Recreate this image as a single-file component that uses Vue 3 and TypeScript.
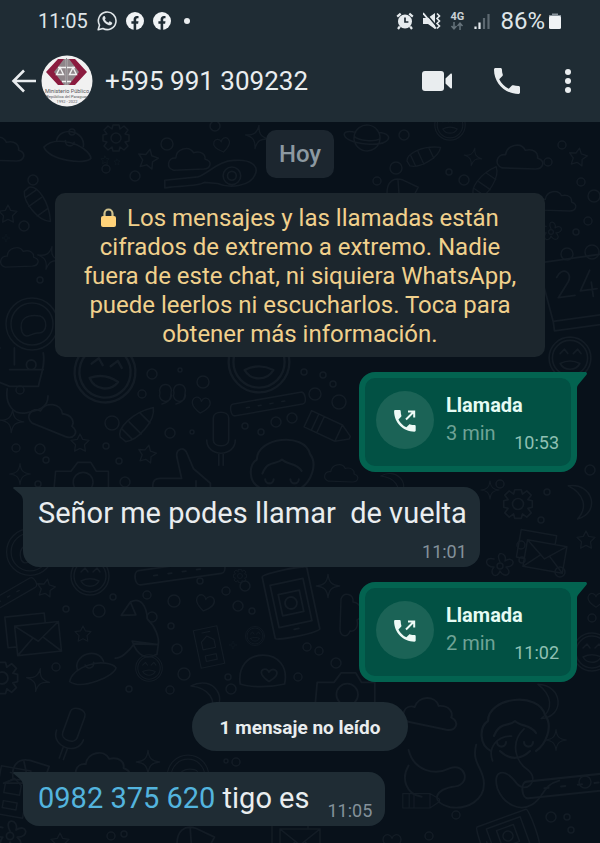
<script setup lang="ts">
type Message =
  | { id: number; kind: 'call'; title: string; duration: string; time: string }
  | { id: number; kind: 'text'; phone?: string; text: string; time: string; inline: boolean }
  | { id: number; kind: 'unread'; text: string }

const contact = '+595 991 309232'

const messages: Message[] = [
  { id: 1, kind: 'call', title: 'Llamada', duration: '3 min', time: '10:53' },
  { id: 2, kind: 'text', text: 'Señor me podes llamar  de vuelta', time: '11:01', inline: false },
  { id: 3, kind: 'call', title: 'Llamada', duration: '2 min', time: '11:02' },
  { id: 4, kind: 'unread', text: '1 mensaje no leído' },
  { id: 5, kind: 'text', phone: '0982 375 620', text: ' tigo es', time: '11:05', inline: true },
]

/* Wallpaper: rings are [x, y, radius], stamps are [shape, x, y, scale, rotation]. */
const rings: [number, number, number][] = [
  [33, 180, 5], [167, 144, 6], [215, 126, 5], [135, 176, 5], [106, 169, 4], [24, 226, 5], [40, 280, 3], [72, 132, 3],
  [404, 135, 5], [396, 168, 6], [377, 181, 4], [449, 172, 3], [464, 180, 5], [548, 162, 4], [562, 145, 4], [581, 182, 4],
  [594, 196, 6], [588, 221, 4], [576, 232, 3], [567, 254, 6], [592, 252, 7],
  [152, 374, 5], [142, 394, 4], [203, 382, 6], [304, 372, 3], [323, 375, 3], [333, 384, 3], [315, 394, 6], [339, 402, 7],
  [112, 423, 7], [40, 449, 5], [16, 448, 4], [106, 446, 3], [119, 461, 3], [46, 460, 3], [245, 426, 3],
  [170, 433, 5], [276, 422, 5], [292, 418, 5], [261, 432, 3], [125, 482, 5], [38, 484, 3], [192, 432, 2], [180, 370, 2],
  [113, 597, 3], [147, 595, 4], [174, 601, 6], [200, 581, 3], [226, 591, 4], [245, 586, 5], [99, 611, 6], [152, 617, 5],
  [171, 626, 3], [238, 606, 5], [252, 611, 3], [177, 649, 5], [184, 674, 6], [228, 677, 3], [231, 689, 5], [170, 690, 4],
  [307, 647, 4], [319, 651, 4], [336, 663, 5], [298, 677, 4], [56, 667, 4], [129, 689, 3], [66, 609, 3],
  [521, 545, 4], [541, 520, 3], [560, 572, 5], [592, 618, 4], [236, 762, 4], [226, 761, 2], [585, 782, 6],
  [551, 817, 5], [567, 817, 3], [456, 815, 4], [429, 836, 4], [571, 830, 3], [111, 836, 4], [124, 834, 3],
  [20, 390, 4], [590, 470, 5], [500, 484, 4], [547, 492, 3], [522, 560, 3],
]

const stamps: [string, number, number, number, number][] = [
  ['cloud', 2, 150, 1.1, 0], ['ufo', 68, 150, 1.1, 12], ['gear', 116, 138, 1, 0], ['star', 148, 159, 1, 12],
  ['cloud', 190, 160, 1, -4], ['heart', 222, 145, 0.8, -12], ['spark', 257, 137, 0.9, 10], ['guitar', 222, 178, 1.1, 0],
  ['star', 105, 160, 0.4, 0], ['star', 117, 162, 0.3, 0], ['rocket', 38, 206, 1, 100], ['star', 8, 214, 0.9, 0],
  ['cloud', 20, 258, 0.9, -4], ['spark', 49, 258, 0.9, 15], ['donut', 32, 324, 1, 0], ['spark', 6, 238, 0.3, 0],
  ['planet', 367, 138, 1, 8], ['smile', 450, 125, 0.8, 0], ['rocket', 425, 156, 0.9, 20], ['spark', 473, 157, 0.7, 12],
  ['cloud', 521, 158, 1.1, 0], ['star', 578, 157, 0.9, 10], ['rocket', 487, 182, 0.9, -10], ['cap', 402, 188, 1, 8],
  ['cloud', 558, 202, 0.9, 0], ['flower', 551, 232, 0.8, 0], ['calendar', 576, 294, 1.2, -8], ['smile', 570, 358, 1.1, 0],
  ['bear', 24, 372, 1.2, 0], ['smile', 105, 372, 1.6, 8], ['spark', 12, 421, 0.9, 4], ['cloud', 55, 420, 1.2, 20],
  ['rocket', 139, 424, 1.1, 0], ['star', 80, 443, 0.9, 0], ['star', 147, 454, 0.9, 12], ['heart', 201, 405, 0.9, 6],
  ['smile', 259, 362, 1.6, 0], ['note', 174, 393, 1, 0], ['bar', 268, 404, 1, -10], ['mic', 221, 440, 1.1, 0],
  ['girl', 282, 468, 1.4, 0], ['crayon', 330, 428, 1, 25], ['spark', 20, 474, 0.8, 0], ['hand', 184, 476, 1.2, 0],
  ['camera', 82, 480, 1.1, 0], ['cloud', 342, 474, 0.8, 0], ['donut', 30, 552, 0.9, 0], ['bar', 180, 572, 1.2, -8],
  ['star', 46, 588, 0.9, 10], ['smile', 90, 576, 1, 0], ['bar', 6, 598, 0.9, -30], ['mail', 38, 638, 1.1, -6],
  ['star', 83, 634, 0.8, 0], ['gear', 2, 678, 1.2, 0], ['spark', 38, 680, 0.9, 12], ['ufo', 92, 672, 1.1, -18],
  ['vase', 142, 640, 1.2, 8], ['smile', 149, 668, 0.7, 0], ['heart', 205, 603, 0.9, 12], ['phone', 209, 647, 0.8, -12],
  ['tablet', 291, 603, 1.2, -12], ['shell', 263, 672, 1.2, 0], ['spark', 328, 586, 0.9, 0], ['cloud', 350, 616, 1, 90],
  ['spark', 233, 645, 0.3, 0], ['camera', 346, 692, 1.2, 0], ['moon', 205, 696, 1, 0], ['smile', 255, 636, 0.5, 0],
  ['gear', 518, 504, 1.1, 0], ['moon', 578, 500, 1, 20], ['mail', 545, 556, 1, 10], ['star', 586, 540, 0.9, 0],
  ['flower', 500, 566, 1, 0], ['smile', 592, 652, 1, 0], ['heart', 596, 600, 0.8, 0], ['moon', 545, 700, 1, 30],
  ['cloud', 432, 714, 1.3, 10], ['girl', 515, 730, 1.5, 0], ['snake', 445, 776, 1.3, 0], ['snake', 520, 770, 1.2, 60],
  ['bar', 575, 785, 1.4, -6], ['tablet', 508, 836, 1, 70], ['spark', 148, 762, 0.9, 0], ['donut', 188, 776, 0.8, 0],
  ['cloud', 104, 768, 1.3, 0], ['cap', 30, 770, 1.2, 0], ['mic', 70, 735, 1.1, 20], ['phone', 12, 792, 1, 10],
  ['flower', 10, 836, 1.2, 0], ['cap', 195, 838, 1.2, 8], ['mail', 300, 842, 1, 0], ['star', 60, 842, 0.9, 0],
  ['heart', 392, 842, 0.9, 0], ['crayon', 422, 800, 0.8, 0], ['spark', 556, 740, 0.8, 0], ['gear', 240, 576, 0.5, 0],
  ['spark', 490, 490, 0.7, 0], ['moon', 392, 484, 0.8, 0],
]
</script>

<template>
  <div class="screen">
    <header class="top">
      <div class="status">
        <span class="clock">11:05</span>
        <svg class="s20" viewBox="0 0 20 20" aria-hidden="true">
          <path d="M1.2 18.8l1.3-4.7A8.8 8.8 0 1 1 5.900 17.500z" fill="none" stroke="#dfe5e8" stroke-width="1.600" stroke-linejoin="round" />
          <path d="M6.600 5.300c.5-.4 1.100-.3 1.300.2l.7 1.600c.1.400-.1.700-.7 1.400.8 1.500 1.900 2.500 3.500 3.200l1-1.100c.3-.3.500-.3.800-.1l1.700.9c.5.300.4.900.1 1.500-.6 1.100-2.200 1.600-3.700 1.100-2.800-.9-4.800-2.800-5.700-5.400-.4-1.400 0-2.600 1-3.300z" fill="#dfe5e8" />
        </svg>
        <svg v-for="n in 2" :key="n" class="s18" viewBox="0 0 18 18" aria-hidden="true">
          <circle cx="9" cy="9" r="9" fill="#f0f3f5" />
          <path d="M7.600 18v-6.200H5.400V9.200h2.200V7.500c0-2.300 1.300-3.500 3.300-3.500.8 0 1.600.1 1.600.1v2.100h-1c-1 0-1.300.6-1.300 1.300v1.700h2.300l-.4 2.600h-1.900V18z" fill="#1f2c34" />
        </svg>
        <span class="dot"></span>
        <span class="spacer"></span>
        <svg class="s18" viewBox="0 0 18 18" aria-hidden="true">
          <circle cx="9" cy="9.500" r="7" fill="#e6ebee" />
          <path d="M1.200 4.600l3.500-3M16.800 4.600l-3.500-3M3.800 14.500L2 17M14.200 14.500L16 17" stroke="#e6ebee" stroke-width="2.200" fill="none" />
          <path d="M9 5.500v4.500h3.400" stroke="#1f2c34" stroke-width="1.700" fill="none" />
        </svg>
        <svg class="s18" viewBox="0 0 18 18" aria-hidden="true">
          <path d="M0 6h5L12 1v16l-7-5H0z" fill="#e6ebee" />
          <path d="M2 .5l11 13" stroke="#1f2c34" stroke-width="1.500" />
          <path d="M0 1l13 15.500" stroke="#e6ebee" stroke-width="1.800" />
          <path d="M14 1.500l2.500 2.500L14 6.500 16.500 9 14 11.500l2.500 2.500-2.500 2.500" stroke="#e6ebee" stroke-width="1.600" fill="none" />
        </svg>
        <span class="network">
          <span>4G</span>
          <svg viewBox="0 0 14 8" width="14" height="8" aria-hidden="true">
            <path d="M4 0v6M1.500 4L4 6.800 6.500 4M10 8V2M7.500 4L10 1.200 12.500 4" fill="none" stroke="#66737b" stroke-width="1.500" />
          </svg>
        </span>
        <svg class="s18" viewBox="0 0 18 18" aria-hidden="true">
          <path d="M2.500 14.500V17M6.500 10.500V17" stroke="#e6ebee" stroke-width="2.200" />
          <path d="M11 6v11M15.500 2v15" stroke="#5d6971" stroke-width="2.200" />
        </svg>
        <span class="percent">86%</span>
        <svg width="14" height="18" viewBox="0 0 14 18" aria-hidden="true">
          <path d="M4 1.500h6V3h3v3H1V3h3z" fill="#87929a" />
          <rect x="1" y="4" width="12" height="13" rx="1.500" fill="#f0f3f5" />
        </svg>
      </div>

      <div class="bar">
        <button class="icon-button" type="button" aria-label="Atrás">
          <svg width="26" height="26" viewBox="0 0 26 26" aria-hidden="true">
            <path d="M25 13H3.500M13 2.500L2.500 13 13 23.500" fill="none" stroke="#e9edef" stroke-width="2.600" />
          </svg>
        </button>
        <svg class="avatar" viewBox="0 0 52 52" role="img" aria-label="Foto de perfil">
          <circle cx="26" cy="26" r="25.500" fill="#f1f1f1" />
          <path d="M12 17L22 4h7l10 13-10 13h-7z" fill="#8e8589" />
          <path d="M5 17L17 4h6L13 17l10 13h-6zM46 17L34 4h-6l10 13-10 13h6z" fill="#8b1b3f" />
          <path d="M25.500 4v26M17 12.500h17M19 12.500l-3.500 7h7zM32 12.500l-3.500 7h7zM21 26.500h9" fill="none" stroke="#f1f1f1" stroke-width="1.400" />
          <path d="M25.500 3v27" stroke="#68666a" stroke-width=".7" />
          <g text-anchor="middle" fill="#55565b">
            <text x="26" y="37.500" font-size="5.500">Ministerio Público</text>
            <text x="26" y="42.500" font-size="4">República del Paraguay</text>
            <text x="26" y="47.500" font-size="4">1992 - 2022</text>
          </g>
        </svg>
        <h1 class="contact">{{ contact }}</h1>
        <div class="actions">
          <button class="icon-button" type="button" aria-label="Videollamada">
            <svg width="30" height="20" viewBox="0 0 30 20" aria-hidden="true">
              <rect x="0" y="0" width="22" height="20" rx="3" fill="#e9edef" />
              <path d="M23.500 7.500L28.500 2.800c.8-.7 1.500-.3 1.500.6v13.200c0 .9-.7 1.300-1.500.6l-5-4.700z" fill="#e9edef" />
            </svg>
          </button>
          <button class="icon-button" type="button" aria-label="Llamar">
            <svg width="26" height="26" viewBox="3 3 18 18" aria-hidden="true">
              <path d="M6.620 10.790c1.440 2.830 3.760 5.140 6.590 6.590l2.200-2.200c.27-.27.67-.36 1.020-.24 1.120.37 2.330.57 3.570.57.55 0 1 .45 1 1V20c0 .55-.45 1-1 1-9.390 0-17-7.610-17-17 0-.55.45-1 1-1h3.500c.55 0 1 .45 1 1 0 1.250.2 2.450.57 3.570.11.35.03.74-.25 1.020l-2.200 2.200z" fill="#e9edef" />
            </svg>
          </button>
          <button class="icon-button" type="button" aria-label="Más opciones">
            <svg width="12" height="26" viewBox="0 0 12 26" aria-hidden="true">
              <g fill="#e9edef"><circle cx="6" cy="4" r="3" /><circle cx="6" cy="13" r="3" /><circle cx="6" cy="22" r="3" /></g>
            </svg>
          </button>
        </div>
      </div>
    </header>

    <main class="chat">
      <svg class="wallpaper" viewBox="0 122 600 721" preserveAspectRatio="xMidYMin slice" aria-hidden="true">
        <defs>
          <path id="cloud" d="M-17 9c-8-3-5-13 3-12 1-9 14-12 18-4 8-2 12 3 11 7 8 3 5 10-2 10z" />
          <path id="ufo" d="M-22 2c4-7 12-9 22-9s20 5 22 10c-3 7-36 10-44-1zM-12-6c0-14 24-15 25 0M-4-8a4 4 0 1 0 8 0" />
          <path id="gear" d="M-3-13h6l1 4 4-3 4 4-3 4 4 1v6l-4 1 3 4-4 4-4-3-1 4h-6l-1-4-4 3-4-4 3-4-4-1v-6l4-1-3-4 4-4 4 3zM5 0A5 5 0 1 1-5 0 5 5 0 1 1 5 0" />
          <path id="star" d="M0-10l3 6 7 1-5 5 1 7-6-3-6 3 1-7-5-5 7-1z" />
          <path id="heart" d="M0 9C-8 4-12-1-9-6c3-4 8-2 9 2 1-4 6-6 9-2 3 5-1 10-9 15z" />
          <path id="spark" d="M0-13C1-4 4-1 13 0 4 1 1 4 0 13-1 4-4 1-13 0-4-1-1-4 0-13z" />
          <path id="guitar" d="M-52 2l30-3c8-2 20-16 34-15 14-1 22 5 18 13-4 10-22 13-34 8l-12-1c-6 4-28 3-36 5zM17-2A8 8 0 1 1 1-2 8 8 0 1 1 17-2M13-2A4 4 0 1 1 5-2 4 4 0 1 1 13-2" />
          <path id="rocket" d="M-17 12c-3-8 10-22 30-27 2 12-14 30-25 31zM-9-2l11 11M1-10l9 9M-15 5l9 9" />
          <path id="donut" d="M26 0A26 26 0 1 1-26 0 26 26 0 1 1 26 0M21 0A21 21 0 1 1-21 0 21 21 0 1 1 21 0M-10 8c-4-14 6-18 18-16 8 2 8 18-2 17-6-1-12 8-16-1z" />
          <path id="planet" d="M13 0A13 13 0 1 1-13 0 13 13 0 1 1 13 0M-12-4C-30-6-26 8 0 6c24-1 28-14 11-13M-13 0C-8 4 8 3 13-1" />
          <path id="smile" d="M19 0A19 19 0 1 1-19 0 19 19 0 1 1 19 0M16 0A16 16 0 1 1-16 0 16 16 0 1 1 16 0M-9-4l4-4 3 4M3-4l4-4 3 4M-9 5c4 7 14 7 18 0-6-3-12-3-18 0z" />
          <path id="cap" d="M-14 8c-2-12 4-18 14-16L16-3 12 8zM-14 8l-8 3h32M-5-7l3 14" />
          <path id="flower" d="M0-4c-6-12 8-10 5-1 9-6 12 6 1 6 8 7-2 12-6 4-3 9-12 3-6-4-10 0-10-11 0-8M3 0A3 3 0 1 1-3 0 3 3 0 1 1 3 0" />
          <path id="calendar" d="M-28-30h56v50h-50zM-22 20v8h50v-8M-14-16c6-9 14-2 9 5l-10 12h14M14-18L4-2h14M14-8V4" />
          <path id="bear" d="M-20-20c-10-6-4 20-2 28l10 4h24c2-10 6-18 4-28M-12-2h28M-8-6V-20M2-6a4 4 0 1 0 8 0 4 4 0 1 0-8 0M-14 14c-2 14 6 22 16 20s18-4 18-14" />
          <path id="note" d="M-3 0A6 6 0 1 1-14 0 6 6 0 1 1-3 0M-3 0c0 8-4 10-9 11M11 0A6 6 0 1 1 0 0 6 6 0 1 1 11 0M11 0c0 8-4 10-9 11" />
          <path id="bar" d="M-34-6h68c5 0 5 12 0 12h-68c-5 0-5-12 0-12zM-22 0h3M-10 0h3M2 0h3M14 0h3" />
          <path id="mic" d="M-7-20c0-7 14-7 14 0V0c0 7-14 7-14 0zM-13 0c0 16 26 16 26 0M-2 13v10M2 13v10" />
          <path id="girl" d="M-16 14c-8-4-8-16-2-20 0-16 34-20 38-4 6 8 0 20-6 24M-14 4c4-10 10-6 14-10 4 4 10 2 14 8M-12 8a3 3 0 1 0 6 0M6 8a3 3 0 1 0 6 0M-10 14c6 6 14 6 20 0" />
          <path id="crayon" d="M-24-8h34l12 7v3L10 10h-34zM-16-8V9M-10-8V9M10-8V9" />
          <path id="hand" d="M-26 18V8c0-4 2-6 6-6h18l-4-18c-1-6 5-9 8-4l6 14 14 12v14M10 4v14" />
          <path id="camera" d="M-26 14l2-22h14l6-8H8l5 8h11v22zM10 2A9 9 0 1 1-8 2 9 9 0 1 1 10 2" />
          <path id="mail" d="M-20-13H20V14h-40zM-20-13L0 3 20-13M-20 14L-5 0M20 14L5 0M-20 6h-8v-28h36v8" />
          <path id="vase" d="M-14-30c8-6 14 2 16 12 8 6 12 14 12 20L-6 4c-4 8-10 14-14 14M-14-30L-20-18-8-20zM-8 2h22v8c-8 6-16 4-22-8z" />
          <path id="phone" d="M-15-24h30v48h-30zM-5-19h10M-8-8l8-6 8 6v10H-8zM-7 10H7v7H-7z" />
          <path id="tablet" d="M-19-26c0-3 38-3 38 0v52c0 3-38 3-38 0zM-14-18h28v36h-28zM-9-9H9V9H-9zM5 0A5 5 0 1 1-5 0 5 5 0 1 1 5 0M-2 22h4" />
          <path id="shell" d="M-19 10c-2-14 6-24 19-24s21 10 18 24c-12 3-28 3-37 0zM5 8c-6-4-8-8-5-10 2-1 4 0 5 2 1-2 4-3 6-1 2 3-1 6-6 9z" />
          <path id="moon" d="M-14-10C8-22 26 4 6 18 12 4 4-8-14-10z" />
          <path id="snake" d="M-28-20c4 16 20 20 32 14 12-4 16 12 4 14-16 2-20 12-4 16 14 2 26-6 26-18S20-10 24-24M-28-8c-6 10-2 22 10 24" />
        </defs>
        <g class="doodles">
          <circle v-for="(r, i) in rings" :key="'r' + i" :cx="r[0]" :cy="r[1]" :r="r[2]" />
          <use
            v-for="(s, i) in stamps"
            :key="'s' + i"
            :href="'#' + s[0]"
            :transform="`translate(${s[1]} ${s[2]}) rotate(${s[4]}) scale(${s[3]})`"
          />
        </g>
      </svg>

      <div class="thread">
        <div class="day">Hoy</div>
        <button class="notice" type="button">
          <svg class="lock" width="15" height="20" viewBox="0 0 15 20" aria-hidden="true">
            <path d="M3.500 9V5.500a4 4 0 0 1 8 0V9" fill="none" stroke="#cfc08c" stroke-width="2.200" />
            <rect x="0" y="8" width="15" height="11" rx="2" fill="#ffd279" />
          </svg>
          Los mensajes y las llamadas están cifrados de extremo a extremo. Nadie fuera de este chat, ni siquiera
          WhatsApp, puede leerlos ni escucharlos. Toca para obtener más información.
        </button>

        <template v-for="m in messages" :key="m.id">
          <article v-if="m.kind === 'call'" class="call">
            <svg class="tail tail-out" width="32" height="20" viewBox="0 0 32 20" aria-hidden="true">
              <path d="M0 0h30c2 0 2.500 1.500 1.300 3L23 13c-.7 1-1 2-1 3v4h-6v-4C16 10 12 6 6 6H0z" fill="#036350" />
            </svg>
            <span class="disc">
              <svg width="24" height="24" viewBox="0 0 24 24" aria-hidden="true">
                <path transform="translate(-2.500 -1.500) scale(1.200)" d="M6.620 10.790c1.440 2.830 3.760 5.140 6.590 6.590l2.200-2.200c.27-.27.67-.36 1.020-.24 1.120.37 2.330.57 3.570.57.55 0 1 .45 1 1V20c0 .55-.45 1-1 1-9.390 0-17-7.610-17-17 0-.55.45-1 1-1h3.500c.55 0 1 .45 1 1 0 1.250.2 2.450.57 3.570.11.35.03.74-.25 1.020l-2.200 2.200z" fill="#eefaf6" />
                <path d="M13 11.500L20.500 4M15 3.400h6.200v6.200" fill="none" stroke="#eefaf6" stroke-width="2" />
              </svg>
            </span>
            <div class="call-body">
              <strong class="call-title">{{ m.title }}</strong>
              <div class="call-row">
                <span class="duration">{{ m.duration }}</span>
                <time class="call-time">{{ m.time }}</time>
              </div>
            </div>
          </article>

          <article v-else-if="m.kind === 'text'" class="text" :class="{ inline: m.inline }">
            <svg class="tail tail-in" width="26" height="18" viewBox="0 0 26 18" aria-hidden="true">
              <path d="M26 0H2C0 0-.5 1 1 2l6 5c2 2 3 4 3 8v3h16z" fill="#1f2c34" />
            </svg>
            <p class="copy"><a v-if="m.phone" class="phone" href="tel:0982375620">{{ m.phone }}</a>{{ m.text }}</p>
            <time class="time">{{ m.time }}</time>
          </article>

          <div v-else class="unread">{{ m.text }}</div>
        </template>
      </div>
    </main>
  </div>
</template>

<style>
body {
  background: #08111a;
}
</style>

<style scoped>
.screen {
  min-height: 100vh;
  display: flex;
  flex-direction: column;
  font-family: Roboto, "Liberation Sans", sans-serif;
  color: #e9edef;
}

svg {
  display: block;
  flex: none;
}

.top {
  background: #1f2c34;
}

.status {
  display: flex;
  align-items: center;
  gap: 9px;
  height: 42px;
  padding: 0 38px;
}

.clock {
  font-size: 20px;
  color: #dfe5e8;
}

.s20 {
  width: 20px;
  height: 20px;
}

.s18 {
  width: 18px;
  height: 18px;
}

.dot {
  width: 6px;
  height: 6px;
  margin-left: 4px;
  border-radius: 50%;
  background: #e9edef;
}

.spacer {
  flex: 1;
}

.network {
  display: flex;
  flex-direction: column;
  align-items: center;
  font-size: 11px;
  line-height: 10px;
  font-weight: 700;
  color: #c9d1d5;
}

.percent {
  margin-right: -6px;
  font-size: 24px;
  line-height: 28px;
  color: #dfe5e8;
}

.bar {
  display: flex;
  align-items: center;
  height: 80px;
  padding: 0 26px 2px 11px;
  box-sizing: border-box;
}

.icon-button {
  padding: 0;
  border: 0;
  background: none;
  cursor: pointer;
}

.avatar {
  width: 52px;
  height: 52px;
  margin: 0 12px 0 4px;
}

.contact {
  flex: 1;
  margin: 0;
  font-size: 26px;
  line-height: 32px;
  font-weight: 400;
  white-space: nowrap;
}

.actions {
  display: flex;
  align-items: center;
  gap: 42px;
}

.chat {
  position: relative;
  flex: 1;
  overflow: hidden;
  background: #08111a;
}

.wallpaper {
  position: absolute;
  inset: 0;
  width: 100%;
  height: 100%;
}

.doodles {
  fill: none;
  stroke: #131c25;
  stroke-width: 1.5;
  stroke-linejoin: round;
  stroke-linecap: round;
}

.thread {
  position: relative;
  display: flex;
  flex-direction: column;
  align-items: flex-start;
  gap: 15px;
  padding: 8px 23px 16px;
}

.day {
  align-self: center;
  padding: 8px 13px;
  border-radius: 10px;
  background: #1c262f;
  color: #8c99a1;
  font-size: 24px;
  line-height: 32px;
  font-weight: 500;
}

.notice {
  align-self: stretch;
  margin: 0 32px;
  padding: 11px 16px 8px;
  border: 0;
  border-radius: 10px;
  background: #1c262d;
  color: #f0d08c;
  font-family: inherit;
  font-size: 24px;
  line-height: 29px;
  text-align: center;
  cursor: pointer;
}

.lock {
  display: inline-block;
  margin-right: 5px;
  vertical-align: -2px;
}

.call {
  position: relative;
  align-self: flex-end;
  display: flex;
  align-items: flex-start;
  gap: 12px;
  padding: 13px 12px 9px 11px;
  border: 6px solid #036350;
  border-radius: 16px;
  background: #025144;
}

.tail {
  position: absolute;
}

.tail-out {
  top: -6px;
  right: -16px;
}

.tail-in {
  top: 0;
  left: -10px;
}

.disc {
  display: flex;
  align-items: center;
  justify-content: center;
  width: 58px;
  height: 58px;
  border-radius: 50%;
  background: #1b6356;
}

.call-body {
  width: 113px;
  line-height: 28px;
}

.call-title {
  display: block;
  font-size: 20px;
  font-weight: 700;
  color: #e6fbf4;
}

.call-row {
  display: flex;
  justify-content: space-between;
}

.duration {
  font-size: 20px;
  color: #6fa396;
}

.call-time {
  padding-top: 10px;
  font-size: 18px;
  color: #8fc0b3;
}

.text {
  position: relative;
  display: flex;
  flex-direction: column;
  gap: 12px;
  padding: 10px 13px 5px 15px;
  border-radius: 16px;
  background: #1f2c34;
}

.text.inline {
  flex-direction: row;
  align-items: flex-end;
  gap: 18px;
}

.copy {
  position: relative;
  margin: 0;
  font-size: 29px;
  line-height: 33px;
  white-space: pre-wrap;
}

.inline .copy {
  padding-bottom: 6px;
}

.phone {
  color: #53b4de;
  text-decoration: none;
}

.time {
  align-self: flex-end;
  font-size: 18px;
  line-height: 20px;
  color: #84919a;
}

.unread {
  align-self: center;
  margin: 5px 0 6px;
  padding: 12px 28px 9px;
  border-radius: 25px;
  background: #1f2c34;
  font-size: 19px;
  line-height: 28px;
  font-weight: 700;
}
</style>
